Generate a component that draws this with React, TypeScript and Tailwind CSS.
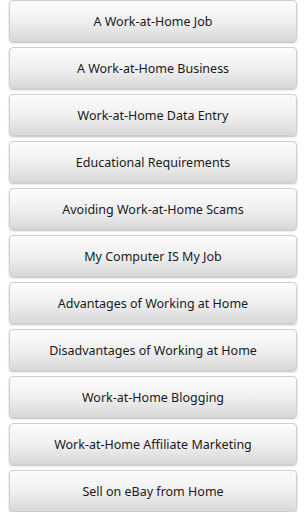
const items = [
  "A Work-at-Home Job",
  "A Work-at-Home Business",
  "Work-at-Home Data Entry",
  "Educational Requirements",
  "Avoiding Work-at-Home Scams",
  "My Computer IS My Job",
  "Advantages of Working at Home",
  "Disadvantages of Working at Home",
  "Work-at-Home Blogging",
  "Work-at-Home Affiliate Marketing",
  "Sell on eBay from Home",
];

export default function App() {
  return (
    <div className="h-[512px] w-[307px] overflow-hidden bg-white">
      <div className="flex flex-col gap-[5px] pl-[9px] pr-[10px]">
        {items.map((label) => (
          <button
            key={label}
            className="flex h-[42px] w-full items-center justify-center rounded-[4px] border border-[#cfcfcf] bg-gradient-to-b from-[#fcfcfc] via-[#f0f0f0] to-[#d8d8d8] pt-[2px] text-[12.5px] text-[#1a1a1a] shadow-[0_1px_2px_rgba(0,0,0,0.25)]"
            style={{ fontFamily: '"Noto Sans", "Open Sans", sans-serif' }}
          >
            {label}
          </button>
        ))}
      </div>
    </div>
  );
}
